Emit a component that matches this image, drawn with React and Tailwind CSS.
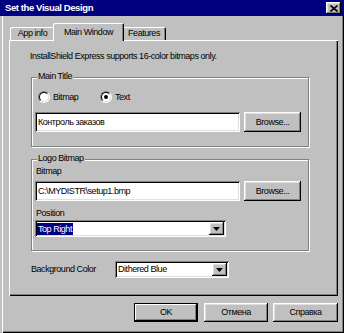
import React from 'react';

const raised =
  'bg-[#c0c0c0] shadow-[inset_-1px_-1px_#000,inset_1px_1px_#fff,inset_-2px_-2px_#808080,inset_2px_2px_#dfdfdf]';
const sunken =
  'bg-white shadow-[inset_1px_1px_#808080,inset_-1px_-1px_#fff,inset_2px_2px_#000,inset_-2px_-2px_#dfdfdf]';
const etched = 'border border-[#808080] shadow-[1px_1px_#fff,inset_1px_1px_#fff]';

const Button = ({ children, className = '' }) => (
  <div className={`flex items-center justify-center ${raised} ${className}`}>{children}</div>
);

const Radio = ({ checked }) => (
  <div className="w-[12px] h-[12px] rounded-full border border-t-[#808080] border-l-[#808080] border-b-white border-r-white">
    <div className="w-full h-full rounded-full bg-white border border-t-black border-l-black border-b-[#dfdfdf] border-r-[#dfdfdf] flex items-center justify-center">
      {checked && <div className="w-[4px] h-[4px] rounded-full bg-black" />}
    </div>
  </div>
);

const Arrow = () => (
  <svg width="7" height="4" viewBox="0 0 7 4">
    <path d="M0 0h7L3.5 4z" fill="#000" />
  </svg>
);

const Select = ({ children, className = '' }) => (
  <div className={`flex items-center h-[17px] pl-[2px] ${sunken} ${className}`}>
    <div className="w-fit">{children}</div>
    <div className="flex-1" />
    <Button className="w-[15px] h-[13px] mr-[2px]">
      <Arrow />
    </Button>
  </div>
);

const GroupBox = ({ label, className = '', children }) => (
  <div className={`relative ml-[1px] w-[278px] pl-[3px] ${etched} ${className}`}>
    <span className="absolute left-[5px] -top-[7px] px-[1px] bg-[#c0c0c0] leading-[11px]">{label}</span>
    {children}
  </div>
);

const Tab = ({ label, selected, className = '' }) =>
  selected ? (
    <div
      className={`relative z-10 h-[18px] flex items-start justify-center pt-[4px] bg-[#c0c0c0] rounded-t-[2px] shadow-[inset_1px_1px_#fff,inset_-1px_0_#000,inset_-2px_0_#808080] ${className}`}
    >
      {label}
    </div>
  ) : (
    <div
      className={`mt-[4px] h-[13px] flex items-start justify-center pt-[1px] bg-[#c0c0c0] rounded-t-[2px] shadow-[inset_1px_1px_#fff,inset_-1px_0_#000,inset_-2px_0_#808080] ${className}`}
    >
      {label}
    </div>
  );

export default function App() {
  return (
    <div className="w-[344px] h-[333px] overflow-hidden bg-[#c0c0c0] flex flex-col text-[9px] leading-[11px] tracking-[-0.45px] text-black font-['Liberation_Sans',Arial,sans-serif] shadow-[inset_2px_0_#c0c0c0,inset_3px_0_#fff,inset_-1px_-1px_#000,inset_-2px_-2px_#808080]">
      {/* Title bar */}
      <div className="h-[16px] shrink-0 bg-[#000080] flex items-center justify-between pl-[5px] pr-[3px]">
        <span className="text-white font-bold text-[9.5px] leading-[12px] tracking-[-0.4px]">Set the Visual Design</span>
        <Button className="w-[15px] h-[12px]">
          <svg width="8" height="7" viewBox="0 0 8 7">
            <path d="M0.5 0.5L7.5 6.5M7.5 0.5L0.5 6.5" stroke="#000" strokeWidth="1.6" />
          </svg>
        </Button>
      </div>

      {/* Tabs */}
      <div className="mt-[7px] h-[17px] flex items-start pl-[10px]">
        <Tab label="App info" className="w-[45px]" />
        <Tab label="Main Window" selected className="-ml-[2px] w-[71px]" />
        <Tab label="Features" className="-ml-[2px] w-[44px]" />
      </div>

      {/* Tab panel */}
      <div className="ml-[9px] w-[329px] h-[256px] shrink-0 flex flex-col pt-[11px] pl-[21px] shadow-[inset_1px_1px_#fff,inset_-1px_-1px_#000,inset_-2px_-2px_#808080]">
        <div>InstallShield Express supports 16-color bitmaps only.</div>

        <GroupBox label="Main Title" className="mt-[15px] pt-[13px] pb-[14px]">
          <div className="flex items-center h-[12px] pl-[3px]">
            <div className="flex items-center gap-[3px] w-[62px]">
              <Radio />
              <span>Bitmap</span>
            </div>
            <div className="flex items-center gap-[3px]">
              <Radio checked />
              <span>Text</span>
            </div>
          </div>
          <div className="mt-[9px] flex gap-[4px]">
            <div className={`w-[205px] h-[20px] flex items-center pl-[3px] ${sunken}`}>Контроль заказов</div>
            <Button className="w-[57px] h-[20px]">Browse...</Button>
          </div>
        </GroupBox>

        <GroupBox label="Logo Bitmap" className="mt-[12px] pt-[6px] pb-[13px]">
          <div className="pl-[1px]">Bitmap</div>
          <div className="mt-[4px] flex gap-[4px]">
            <div className={`w-[205px] h-[20px] flex items-center pl-[3px] ${sunken}`}>C:\MYDISTR\setup1.bmp</div>
            <Button className="w-[57px] h-[20px]">Browse...</Button>
          </div>
          <div className="mt-[7px] pl-[1px]">Position</div>
          <Select className="mt-[1px] w-[191px]">
            <div className="bg-[#000080] text-white px-[1px] leading-[12px]">Top Right</div>
          </Select>
        </GroupBox>

        <div className="mt-[10px] flex items-center">
          <span className="w-[85px] pl-[1px]">Background Color</span>
          <Select className="w-[114px]">
            <span className="pl-[1px]">Dithered Blue</span>
          </Select>
        </div>
      </div>

      {/* Dialog buttons */}
      <div className="mt-[7px] flex">
        <div className="ml-[134px] w-[64px] h-[19px] flex items-center justify-center bg-[#c0c0c0] shadow-[inset_0_0_0_1px_#000,inset_-2px_-2px_#000,inset_2px_2px_#fff,inset_-3px_-3px_#808080]">
          OK
        </div>
        <Button className="ml-[6px] w-[64px] h-[19px]">Отмена</Button>
        <Button className="ml-[5px] w-[65px] h-[19px]">Справка</Button>
      </div>
    </div>
  );
}
